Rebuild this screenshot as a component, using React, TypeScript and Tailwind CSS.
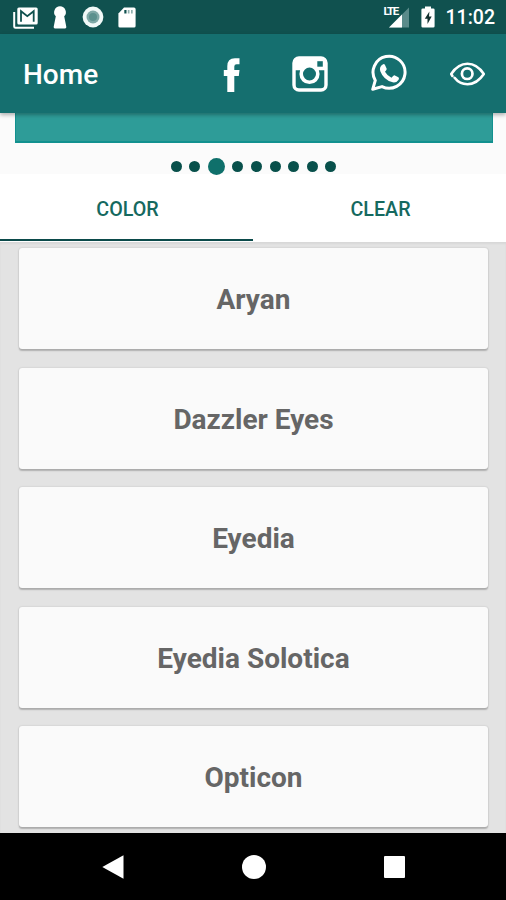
import React from "react";

const dots = [false, false, true, false, false, false, false, false, false];

const brands = ["Aryan", "Dazzler Eyes", "Eyedia", "Eyedia Solotica", "Opticon"];

const StatusBar = () => {
  return (
    <div className="h-[34px] shrink-0 bg-[#10514f] flex items-center justify-between pl-[13px] pr-[11px] text-white">
      <div className="flex items-center">
        <svg className="w-[25px] h-[22px] mt-px" viewBox="0 0 25 22" fill="none">
          <path d="M1.2 5v14.5q0 1.3 1.3 1.3H21" stroke="#fff" strokeWidth="2" />
          <rect x="4.3" y="0.5" width="20.4" height="17" rx="1.6" fill="#fff" />
          <path d="M8 14.8V4.2l6.3 5 6.4-5v10.6" stroke="#10514f" strokeWidth="1.8" />
        </svg>
        <svg className="w-[14px] h-[23px] ml-[15px]" viewBox="0 0 14 23" fill="#fff">
          <path d="M7 .3a5.900 5.900 0 0 1 4.200 10L13.300 20.800q.3 1.800-1.300 1.800H2Q.4 22.600.7 20.800L2.800 10.300A5.900 5.900 0 0 1 7 .3z" />
        </svg>
        <svg className="w-[22px] h-[22px] ml-[15px]" viewBox="0 0 22 22">
          <circle cx="11" cy="11" r="10.400" fill="#f1f9f8" />
          <circle cx="11" cy="11" r="6.500" fill="#7fa9a7" />
          <circle cx="11" cy="11" r="4" fill="#5b918e" />
        </svg>
        <svg className="w-[18px] h-[21px] ml-[14px]" viewBox="0 0 18 21">
          <path d="M6 .5h10q1.600 0 1.600 1.600v16.800q0 1.600-1.600 1.600H2q-1.600 0-1.600-1.600V6.500z" fill="#fff" />
          <path d="M6.300 3h2.200v3.500H6.300z" fill="#10514f" />
          <path d="M9.800 3h1.700v3.500H9.800zM13 3h1.700v3.500H13z" fill="#8fb0ae" />
        </svg>
      </div>

      <div className="flex items-center">
        <div className="relative w-[26px] h-[22px] mr-[11px]">
          <svg className="w-full h-full" viewBox="0 0 26 22">
            <path d="M5 21.500 25 1.500v20z" fill="#5a8b8a" />
            <path d="M5 21.500 18 8.500v13z" fill="#fff" />
          </svg>
          <span className="absolute left-0 top-0 bg-[#10514f] text-[11.500px] leading-[11px] font-bold tracking-[-1.400px]">
            LTE
          </span>
        </div>
        <svg className="w-[14px] h-[22px] mr-[11px]" viewBox="0 0 14 22">
          <path d="M4 .4h6v2h2.200q1.400 0 1.400 1.400v16.400q0 1.400-1.400 1.400H1.800Q.4 21.600.4 20.200V3.800q0-1.400 1.400-1.400H4z" fill="#fff" />
          <path d="M8.400 5.500 3.800 12.800h2.700v5.200l4.200-7.400H8z" fill="#12302f" />
        </svg>
        <span className="text-[19.500px] leading-[34px] font-medium pt-[2px]">11:02</span>
      </div>
    </div>
  );
};

const AppBar = () => {
  return (
    <div className="relative z-10 h-[79px] shrink-0 bg-[#156f6f] flex items-center justify-between pl-[23px] pr-[21px] text-white shadow-[0_2px_4px_rgba(0,0,0,0.3)]">
      <h1 className="text-[28px] leading-[32px] font-medium pt-[3px]">Home</h1>
      <div className="flex items-center">
        <svg className="w-[17px] h-[34px] mt-[3px] mr-[52px]" viewBox="0 0 17 34" fill="#fff">
          <path d="M4.300 34V18H.8v-6h3.500V8.300Q4.300.3 11.900.300H16.500V6.200H13.600Q11.300 6.200 11.300 8.500V12h5.200l-.7 6h-4.500v16z" />
        </svg>
        <svg className="w-[36px] h-[36px] mt-[1px] mr-[43px]" viewBox="0 0 36 36" fill="none">
          <rect x="2" y="2" width="32" height="32" rx="5" stroke="#fff" strokeWidth="3.400" />
          <path d="M2 14.200V7q0-5 5-5h22q5 0 5 5v7.200z" fill="#fff" />
          <circle cx="17.500" cy="18" r="8.300" fill="#156f6f" stroke="#fff" strokeWidth="3.600" />
          <path d="M25.300 5.200h5.500v5.500h-5.500z" fill="#156f6f" />
        </svg>
        <svg className="w-[36px] h-[37px] mb-[2px] mr-[43px]" viewBox="0 0 36 37" fill="none">
          <path
            d="M1.700 35.300 4.300 26.400A16 16 0 1 1 11 32.600z"
            stroke="#fff"
            strokeWidth="3"
            strokeLinejoin="round"
          />
          <path
            d="M11.700 10.400q1.500-1.200 2.300.6l1.700 3.700q.3 1-1.700 3.100 2.400 4.300 6.500 6 2-2.800 2.900-2.500l4 2q1.100.6.200 2.400-1.900 3.200-5.900 2.600Q12.600 26 9.300 17.200q-1.400-4.400 2.400-6.800z"
            fill="#fff"
          />
        </svg>
        <svg className="w-[35px] h-[24px]" viewBox="0 0 35 24" fill="none" stroke="#fff">
          <path
            d="M4.600 15.800Q9.500 22.200 17.500 22.200 27 22.200 33.800 12 27 1.800 17.500 1.800 8 1.800 1.200 12L2.400 14"
            strokeWidth="2.600"
            strokeLinecap="round"
          />
          <circle cx="17.200" cy="11.700" r="5.300" strokeWidth="2.700" />
        </svg>
      </div>
    </div>
  );
};

const Slider = () => {
  return (
    <div className="relative z-[1] h-[61px] shrink-0 bg-[#fbfbfb] pl-[15px] pr-[14px]">
      <div className="h-[30px] bg-[#2e9c98] border-x border-b-2 border-[#12918f] mr-[-1px]"></div>
      <div className="flex justify-center items-center gap-[7.600px] pt-[15px]">
        {dots.map((active, index) => (
          <span
            key={index}
            className={
              active
                ? "w-[17px] h-[17px] shrink-0 rounded-full bg-[#0f706b]"
                : "w-[11px] h-[11px] shrink-0 rounded-full bg-[#08504b]"
            }
          ></span>
        ))}
      </div>
    </div>
  );
};

const Tabs = () => {
  return (
    <div className="h-[68px] shrink-0 bg-white grid grid-cols-2 text-center text-[19.700px] leading-[71px] font-medium text-[#15695f]">
      <div className="border-b-2 border-[#0b4a4a] h-[67px] pl-[2px]">COLOR</div>
      <div className="pl-[2px]">CLEAR</div>
    </div>
  );
};

const NavBar = () => {
  return (
    <div className="h-[67px] shrink-0 bg-black flex items-center justify-between pl-[102px] pr-[101px]">
      <svg className="w-[22px] h-[24px]" viewBox="0 0 22 24" fill="#fff">
        <path d="M21.500.3v23.400L.3 12z" />
      </svg>
      <span className="w-[24px] h-[24px] rounded-full bg-white"></span>
      <span className="w-[21px] h-[22px] rounded-[1px] bg-white"></span>
    </div>
  );
};

const App = () => {
  return (
    <div className="w-[506px] h-[900px] flex flex-col overflow-hidden bg-[#e3e3e3] font-[Roboto,sans-serif]">
      <StatusBar />
      <AppBar />
      <Slider />
      <Tabs />
      <div className="flex-1 min-h-0 overflow-hidden flex flex-col gap-[18.600px] pt-[6px] pl-[19px] pr-[18px] shadow-[inset_0_2px_2px_rgba(0,0,0,0.05)]">
        {brands.map((name) => (
          <div
            key={name}
            className="h-[101px] shrink-0 rounded-[3px] bg-[#fafafa] flex justify-center items-center text-[28px] font-bold text-[#666] pt-[3px] shadow-[0_1.500px_1.500px_rgba(0,0,0,0.22),0_0_2px_rgba(0,0,0,0.16)]"
          >
            {name}
          </div>
        ))}
      </div>
      <NavBar />
    </div>
  );
};

export default App;
